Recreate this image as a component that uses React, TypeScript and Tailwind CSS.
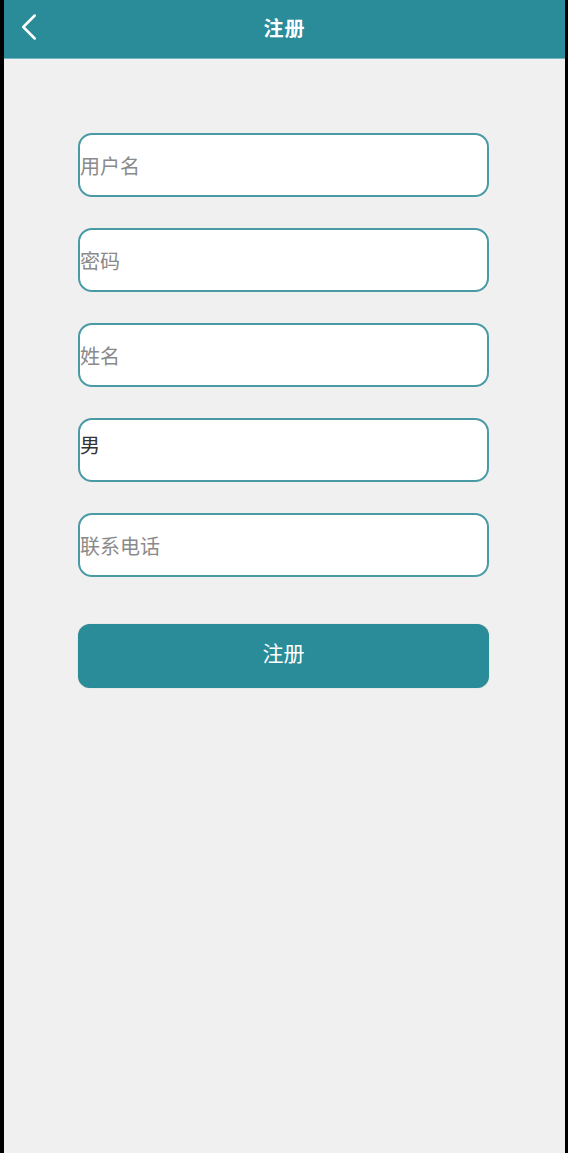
import { ChevronLeft } from "lucide-react";

const fields = ["用户名", "密码", "姓名"];

const App = () => {
  return (
    <div className="min-h-[1153px] bg-black pl-[4px] pr-[3px] font-['Noto_Sans_CJK_SC',sans-serif]">
      <div className="min-h-[1153px] bg-[#f0f0f0]">
        {/* Header */}
        <header className="relative h-[59px] bg-[#2a8c99] border-b border-[#73b7c0] flex items-center justify-center pb-[3px]">
          <button className="absolute left-[2px] top-[4px] text-white">
            <ChevronLeft className="h-[46px] w-[46px]" strokeWidth={1.3} />
          </button>
          <h1 className="text-[20px] font-bold text-white tracking-[1px]">注册</h1>
        </header>

        {/* Form */}
        <div className="flex flex-col items-center pt-[74px]">
          <div className="w-[411px] flex flex-col gap-[31px] mr-[2px]">
            {fields.map((f) => (
              <input
                key={f}
                type={f === "密码" ? "password" : "text"}
                placeholder={f}
                className="h-[64px] w-full rounded-[14px] border-[2.5px] border-[#4a9aa6] bg-white px-0 text-[20px] text-[#333] outline-none placeholder:text-[#8a8a8a]"
              />
            ))}
            <div className="h-[64px] w-full rounded-[14px] border-[2.5px] border-[#4a9aa6] bg-white pt-[12px] text-[20px] leading-[26px] text-[#333]">
              男
            </div>
            <input
              placeholder="联系电话"
              className="h-[64px] w-full rounded-[14px] border-[2.5px] border-[#4a9aa6] bg-white px-0 text-[20px] text-[#333] outline-none placeholder:text-[#8a8a8a]"
            />
            <button className="mt-[16px] h-[64px] w-full rounded-[12px] bg-[#2a8c99] pb-[6px] text-[21px] text-white shadow-[0_0_1px_rgba(0,0,0,0.3)]">
              注册
            </button>
          </div>
        </div>
      </div>
    </div>
  );
};

export default App;
